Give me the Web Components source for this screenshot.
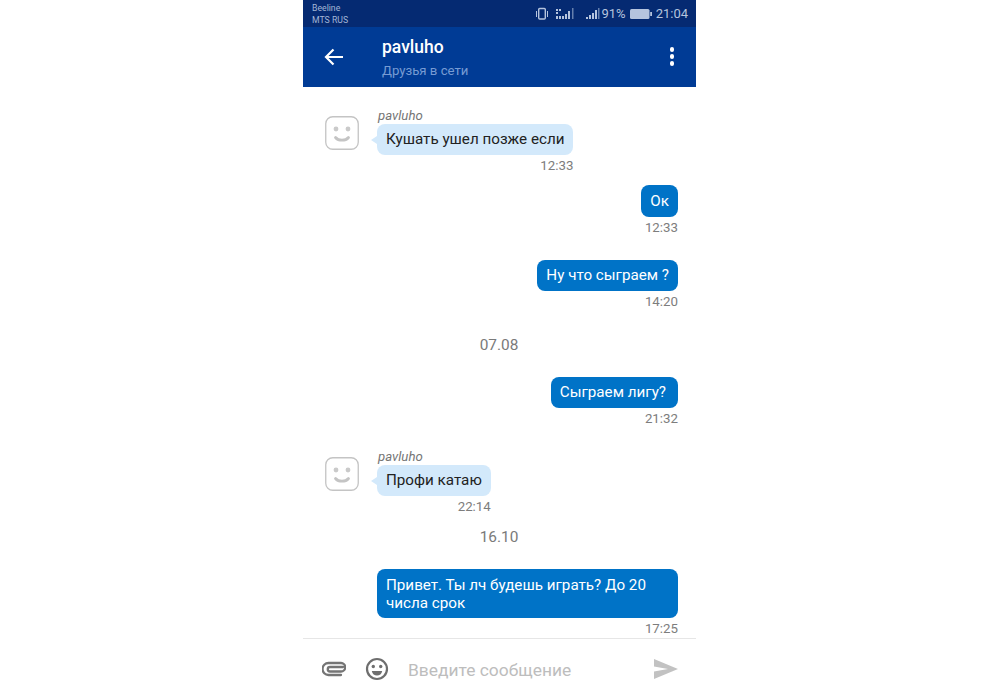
<!DOCTYPE html>
<html>
<head>
<meta charset="utf-8">
<style>
  html, body { margin: 0; background: #fff; }
  body { padding-left: 303px; font-family: Roboto, "Liberation Sans", sans-serif; }
  chat-app { width: 393px; height: 700px; }
</style>
</head>
<body>
<chat-app>
  <status-bar></status-bar>
  <chat-header name="pavluho" status="Друзья в сети"></chat-header>
  <message-list>
    <chat-message kind="in" name="pavluho" time="12:33" style="margin-top:24px">Кушать ушел позже если</chat-message>
    <chat-message kind="out" time="12:33" tall style="margin-top:12px">Ок</chat-message>
    <chat-message kind="out" time="14:20" style="margin-top:25px">Ну что сыграем ?</chat-message>
    <date-label style="margin-top:27px">07.08</date-label>
    <chat-message kind="out" time="21:32" style="margin-top:23px;--pad-right:12px">Сыграем лигу?</chat-message>
    <chat-message kind="in" name="pavluho" time="22:14" style="margin-top:26px">Профи катаю</chat-message>
    <date-label style="margin-top:14px">16.10</date-label>
    <chat-message kind="out" time="17:25" wide style="margin-top:23px">Привет. Ты лч будешь играть? До 20 числа срок</chat-message>
  </message-list>
  <chat-input placeholder="Введите сообщение"></chat-input>
</chat-app>

<script>
class ChatApp extends HTMLElement {
  constructor() {
    super();
    this.attachShadow({ mode: "open" }).innerHTML = `
      <style>
        :host { display: flex; flex-direction: column; overflow: hidden; background: #fff; }
      </style>
      <slot></slot>`;
  }
}

class StatusBar extends HTMLElement {
  constructor() {
    super();
    this.attachShadow({ mode: "open" }).innerHTML = `
      <style>
        :host { display: flex; justify-content: space-between; align-items: center; height: 27px; flex: none;
          padding: 0 8px 0 9px; box-sizing: border-box; background: #052a72; color: #b5c4de; }
        .carriers { font-size: 8.7px; line-height: 12px; color: #a3b6d6; padding-top: 1px; }
        .right { display: flex; align-items: center; font-size: 13px; }
        svg { display: block; flex: none; }
        .pct { margin: 0 4px 0 1px; }
        .time { margin-left: 4px; }
      </style>
      <div class="carriers"><div>Beeline</div><div>MTS RUS</div></div>
      <div class="right">
        <svg width="14" height="14" viewBox="0 0 14 14" fill="none" stroke="#b5c4de">
          <rect x="3.700" y="1.500" width="6.600" height="10.500" rx="1" stroke-width="1.400"/>
          <path d="M1.500 4v6M12.500 4v6"/>
        </svg>
        <svg width="20" height="14" viewBox="0 0 20 14" fill="#b5c4de" style="margin-left:6px">
          <path d="M1 2h2v2H1zM4 2h2v2H4zM1 5h2v2H1zM1 9h2v3H1zM4 9h2v3H4zM7 9h2v3H7zM10 7h2v5h-2zM13 4h2v8h-2z"/>
          <path d="M17 1h1.500v11H17z" opacity=".55"/>
        </svg>
        <svg width="15" height="14" viewBox="0 0 15 14" fill="#b5c4de" style="margin-left:10px">
          <path d="M1 10h2v2H1zM4 8h2v4H4zM7 6h2v6H7zM10 3h2v9h-2z"/>
          <path d="M13 1h1.500v11H13z" opacity=".55"/>
        </svg>
        <span class="pct">91%</span>
        <svg width="22" height="10" viewBox="0 0 22 10">
          <rect x="0" y="0" width="19.500" height="10" rx="1.500" fill="#b5c4de"/>
          <rect x="20.200" y="3" width="1.800" height="4" fill="#b5c4de"/>
        </svg>
        <span class="time">21:04</span>
      </div>`;
  }
}

class ChatHeader extends HTMLElement {
  constructor() {
    super();
    const name = this.getAttribute("name") || "";
    const status = this.getAttribute("status") || "";
    this.attachShadow({ mode: "open" }).innerHTML = `
      <style>
        :host { display: flex; align-items: center; height: 60px; flex: none; box-sizing: border-box;
          background: #003b95; color: #fff; }
        .back { margin-left: 21px; width: 20px; flex: none; display: block; margin-top: -1px; }
        .titles { margin-left: 38px; flex: 1; }
        .name { font-size: 17.500px; font-weight: 500; line-height: 20px; margin-top: 1px; }
        .status { font-size: 13.200px; line-height: 16px; color: #779bd3; margin-top: 6px; }
        .more { margin-right: 22px; display: flex; flex-direction: column; gap: 2.500px; margin-top: -1px; }
        .more i { display: block; width: 4.500px; height: 4.500px; border-radius: 50%; background: #fff; }
      </style>
      <svg class="back" width="20" height="18" viewBox="0 0 20 18" fill="none" stroke="#fff" stroke-width="2.200">
        <path d="M19 9H2.500M9.500 1.500 2 9l7.500 7.500"/>
      </svg>
      <div class="titles">
        <div class="name">${name}</div>
        <div class="status">${status}</div>
      </div>
      <div class="more"><i></i><i></i><i></i></div>`;
  }
}

class MessageList extends HTMLElement {
  constructor() {
    super();
    this.attachShadow({ mode: "open" }).innerHTML = `
      <style>
        :host { display: flex; flex-direction: column; height: 552px; flex: none; overflow: hidden;
          padding: 0 18px 0 22px; box-sizing: border-box; }
      </style>
      <slot></slot>`;
  }
}

class ChatMessage extends HTMLElement {
  constructor() {
    super();
    const kind = this.getAttribute("kind") || "out";
    const name = this.getAttribute("name");
    const time = this.getAttribute("time") || "";
    const avatar = kind === "in" ? `
      <svg class="avatar" width="34" height="34" viewBox="0 0 34 34" fill="none">
        <rect x=".75" y=".75" width="32.500" height="32.500" rx="7" stroke="#c4c4c4" stroke-width="1.300"/>
        <circle cx="11" cy="13" r="2.400" fill="#cacaca"/>
        <circle cx="23" cy="13" r="2.400" fill="#cacaca"/>
        <path d="M10.500 21.500c3 3.600 10 3.600 13 0" stroke="#c4c4c4" stroke-width="2.800" stroke-linecap="round"/>
      </svg>` : "";
    this.attachShadow({ mode: "open" }).innerHTML = `
      <style>
        :host { display: flex; flex: none; gap: 18px; justify-content: ${kind === "in" ? "flex-start" : "flex-end"}; }
        .avatar { flex: none; margin-top: 5px; }
        .col { display: flex; flex-direction: column; align-items: flex-end; }
        .name { align-self: flex-start; font-size: 13.200px; font-style: italic; line-height: 9px; color: #757575; margin: 0 0 4px 1px; }
        .bubble { position: relative; font-size: 15.200px; line-height: 19px; padding: 6px var(--pad-right, 9px) 6px 9px; border-radius: 8px;
          background: ${kind === "in" ? "#d3e9fb" : "#0073c7"}; color: ${kind === "in" ? "#222" : "#fff"}; }
        :host([tall]) .bubble { padding-top: 7px; }
        :host([wide]) .bubble { width: 301px; box-sizing: border-box; line-height: 18px; padding-top: 7px; }
        .tail { position: absolute; left: -6px; top: 12px; width: 0; height: 0;
          border: 4px solid transparent; border-left: 0; border-right: 6px solid #d3e9fb; }
        .time { font-size: 13.300px; line-height: 15px; color: #7d7d7d; margin-top: 3px; }
      </style>
      ${avatar}
      <div class="col">
        ${name ? `<div class="name">${name}</div>` : ""}
        <div class="bubble">${kind === "in" ? `<span class="tail"></span>` : ""}<slot></slot></div>
        <div class="time">${time}</div>
      </div>`;
  }
}

class DateLabel extends HTMLElement {
  constructor() {
    super();
    this.attachShadow({ mode: "open" }).innerHTML = `
      <style>
        :host { display: block; flex: none; text-align: center; font-size: 15.400px; line-height: 18px;
          color: #7a7a7a; padding-right: 5px; }
      </style>
      <slot></slot>`;
  }
}

class ChatInput extends HTMLElement {
  constructor() {
    super();
    const placeholder = this.getAttribute("placeholder") || "";
    this.attachShadow({ mode: "open" }).innerHTML = `
      <style>
        :host { display: flex; align-items: center; height: 61px; flex: none; box-sizing: border-box;
          border-top: 1px solid #e6e6e6; padding: 0 18px 0 19px; margin-top: -1px; }
        svg { display: block; flex: none; }
        .text { flex: 1; font-size: 17.400px; color: #bdbdbd; margin-left: 19px; padding-top: 1px; }
      </style>
      <svg width="24" height="16" viewBox="0 0 24 16" fill="none" stroke="#757575" stroke-width="2.300" stroke-linecap="round">
        <path d="M21 6H8a2 2 0 0 0 0 4.500h11a3.500 3.500 0 0 0 0-8.500H6.500a5.500 5.500 0 0 0 0 12H19"/>
      </svg>
      <svg width="24" height="24" viewBox="0 0 24 24" fill="none" style="margin-left:19px">
        <circle cx="12" cy="12" r="10" stroke="#6e6e6e" stroke-width="2.200"/>
        <circle cx="8.300" cy="9.500" r="1.700" fill="#6e6e6e"/>
        <circle cx="15.700" cy="9.500" r="1.700" fill="#6e6e6e"/>
        <path d="M6.800 14h10.400c-.6 3-2.600 4.600-5.200 4.600S7.400 17 6.800 14z" fill="#6e6e6e"/>
      </svg>
      <div class="text">${placeholder}</div>
      <svg width="25" height="20" viewBox="0 0 25 20" fill="#c2c2c2">
        <path d="M1 0 25 10 1 20V12.500L15 10 1 7.500z"/>
      </svg>`;
  }
}

customElements.define("chat-app", ChatApp);
customElements.define("status-bar", StatusBar);
customElements.define("chat-header", ChatHeader);
customElements.define("message-list", MessageList);
customElements.define("chat-message", ChatMessage);
customElements.define("date-label", DateLabel);
customElements.define("chat-input", ChatInput);
</script>
</body>
</html>
